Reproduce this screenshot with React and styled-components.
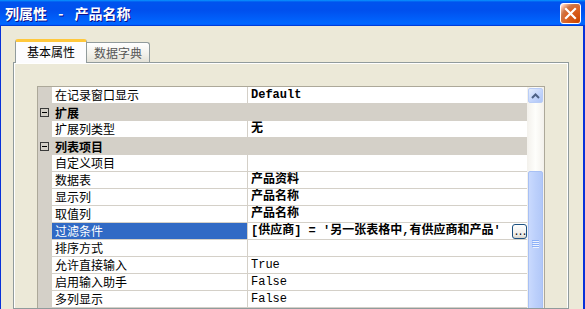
import React from "react";
import styled, { createGlobalStyle } from "styled-components";

const GlobalStyle = createGlobalStyle`
  html, body { margin: 0; padding: 0; background: #ECE9D8; overflow: hidden; }
  * { box-sizing: border-box; }
`;

const CJK = `"Noto Sans CJK SC", "Noto Sans", sans-serif`;
const MONO = `"Liberation Mono", "Noto Sans CJK SC", monospace`;

const Window = styled.div`
  width: 585px;
  height: 309px;
  display: flex;
  flex-direction: column;
  background: #ECE9D8;
  overflow: hidden;
`;

const TitleBar = styled.div`
  height: 26px;
  flex: none;
  display: flex;
  align-items: center;
  justify-content: space-between;
  padding: 0 4px 0 5px;
  background: linear-gradient(180deg, #0997ff, #0053ee 8%, #0050ee 40%, #0066ff 88%, #0066ff 93%, #005bff 95%, #003dd7 96%, #003dd7);
`;

const Title = styled.div`
  color: #fff;
  font-family: ${CJK};
  font-weight: 700;
  font-size: 14px;
  line-height: 16px;
  white-space: pre;
  word-spacing: 8px;
  text-shadow: 1px 1px #0f1089;
`;

const CloseButton = styled.div`
  width: 21px;
  height: 21px;
  border: 1px solid #fff;
  border-radius: 3px;
  background-image: radial-gradient(circle at 90% 90%, #cc4600 0, #dc6527 55%, #cd7546 70%, #ffccb2 90%, #fff 100%);
  display: flex;
  align-items: center;
  justify-content: center;
`;

const Body = styled.div`
  flex: 1;
  min-height: 0;
  display: flex;
  flex-direction: column;
  border-left: 1px solid #0831d9;
  border-right: 2px solid #0831d9;
  padding: 13px 14px 0 12px;
`;

const TabStrip = styled.div`
  height: 23px;
  flex: none;
  display: flex;
  align-items: flex-end;
  padding-left: 2px;
`;

const Tab = styled.div`
  font-family: ${CJK};
  font-size: 12px;
  display: flex;
  align-items: center;
  justify-content: center;
  border: 1px solid #919b9c;
  border-bottom: none;
  border-radius: 3px 3px 0 0;
  ${(p) =>
    p.$active
      ? `
    width: 72px;
    height: 24px;
    margin-bottom: -1px;
    position: relative;
    z-index: 1;
    border-top: 3px solid #ffc83c;
    box-shadow: inset 0 -1px 0 #fcfcfe;
    background: #fcfcfe;
    color: #000;
    padding-bottom: 2px;
  `
      : `
    width: 63px;
    height: 20px;
    border-left: none;
    border-radius: 0 3px 0 0;
    background: linear-gradient(180deg, #ffffff, #f1f0ea 60%, #e3e1d7);
    color: #555;
  `}
`;

const Panel = styled.div`
  flex: 1;
  min-height: 0;
  border: 1px solid #919b9c;
  box-shadow: inset 1px 1px 0 #fff, inset -1px 0 0 #fff;
  padding: 23px 23px 0 23px;
  overflow: hidden;
`;

const Grid = styled.div`
  width: 508px;
  height: 260px;
  border: 1px solid #aca899;
  display: flex;
  background: #fff;
`;

const Rows = styled.div`
  width: 489px;
  display: flex;
  flex-direction: column;
`;

const Row = styled.div`
  display: grid;
  grid-template-columns: 14px 196px 279px;
  height: 17px;
  flex: none;
  background: ${(p) => (p.$group ? "#D4D0C8" : "#fff")};
`;

const Gutter = styled.div`
  background: #d4d0c8;
  display: flex;
  align-items: center;
  padding-left: 2px;
`;

const NameCell = styled.div`
  border-right: 1px solid #d4d0c8;
  border-bottom: 1px solid #d4d0c8;
  padding-left: 3px;
  font-family: ${CJK};
  font-size: 12px;
  line-height: 16px;
  white-space: nowrap;
  overflow: hidden;
  background: ${(p) => (p.$selected ? "#316AC5" : "#fff")};
  color: ${(p) => (p.$selected ? "#fff" : "#000")};
`;

const ValueCell = styled.div`
  border-bottom: 1px solid #d4d0c8;
  padding-left: 3px;
  display: flex;
  align-items: center;
  min-width: 0;
`;

const ValueText = styled.span`
  flex: 1;
  min-width: 0;
  font-family: ${MONO};
  font-size: 12px;
  line-height: 16px;
  font-weight: ${(p) => (p.$bold ? 700 : 400)};
  color: #000;
  white-space: pre;
  overflow: hidden;
`;

const GroupLabel = styled.div`
  grid-column: 2 / 4;
  padding-left: 3px;
  font-family: ${CJK};
  font-size: 12px;
  font-weight: 700;
  line-height: 17px;
  color: #000;
`;

const EllipsisButton = styled.div`
  width: 15px;
  height: 15px;
  flex: none;
  border: 1px solid #1c5180;
  border-radius: 3px;
  background: linear-gradient(180deg, #ffffff, #ecebe6 80%, #d6d0c5);
  font-family: ${MONO};
  font-size: 10px;
  line-height: 15px;
  text-align: center;
  color: #000;
  letter-spacing: -2px;
  overflow: hidden;
`;

const Scrollbar = styled.div`
  width: 17px;
  display: flex;
  flex-direction: column;
  padding: 1px 1px 0 1px;
  background: linear-gradient(90deg, #f3f1ec, #fefefb 50%, #f3f1ec);
`;

const ScrollButton = styled.div`
  height: 15px;
  flex: none;
  border: 1px solid #b9cdf7;
  border-radius: 2px;
  background: linear-gradient(135deg, #e6eefc, #c1d3fb 60%, #b0c7f7);
  display: flex;
  align-items: center;
  justify-content: center;
`;

const Thumb = styled.div`
  flex: 1;
  margin-top: 68px;
  border: 1px solid #a8c0f4;
  border-radius: 2px;
  background: linear-gradient(90deg, #c9d9fd, #bcd0fb 50%, #b2c8f8);
  display: flex;
  justify-content: center;
  padding-top: 68px;
`;

const MinusIcon = () => (
  <svg width="9" height="9" viewBox="0 0 9 9">
    <rect x="0.5" y="0.5" width="8" height="8" fill="none" stroke="#3a3a3a" />
    <line x1="2" y1="4.5" x2="7" y2="4.5" stroke="#000" />
  </svg>
);

const rows = [
  { name: "在记录窗口显示", value: "Default", bold: true },
  { group: "扩展" },
  { name: "扩展列类型", value: "无", bold: true },
  { group: "列表项目" },
  { name: "自定义项目", value: "" },
  { name: "数据表", value: "产品资料", bold: true },
  { name: "显示列", value: "产品名称", bold: true },
  { name: "取值列", value: "产品名称", bold: true },
  {
    name: "过滤条件",
    value: "[供应商] = '另一张表格中,有供应商和产品'",
    bold: true,
    selected: true,
    button: true,
  },
  { name: "排序方式", value: "" },
  { name: "允许直接输入", value: "True" },
  { name: "启用输入助手", value: "False" },
  { name: "多列显示", value: "False" },
  { name: "", value: "" },
];

export default function App() {
  return (
    <>
      <GlobalStyle />
      <Window>
        <TitleBar>
          <Title>列属性 - 产品名称</Title>
          <CloseButton>
            <svg width="13" height="13" viewBox="0 0 13 13">
              <path d="M2 2 L11 11 M11 2 L2 11" stroke="#fff" strokeWidth="2.2" strokeLinecap="square" />
            </svg>
          </CloseButton>
        </TitleBar>
        <Body>
          <TabStrip>
            <Tab $active>基本属性</Tab>
            <Tab>数据字典</Tab>
          </TabStrip>
          <Panel>
            <Grid>
              <Rows>
                {rows.map((r, i) =>
                  r.group ? (
                    <Row key={i} $group>
                      <Gutter>
                        <MinusIcon />
                      </Gutter>
                      <GroupLabel>{r.group}</GroupLabel>
                    </Row>
                  ) : (
                    <Row key={i}>
                      <Gutter />
                      <NameCell $selected={r.selected}>{r.name}</NameCell>
                      <ValueCell>
                        <ValueText $bold={r.bold}>{r.value}</ValueText>
                        {r.button && <EllipsisButton>...</EllipsisButton>}
                      </ValueCell>
                    </Row>
                  )
                )}
              </Rows>
              <Scrollbar>
                <ScrollButton>
                  <svg width="9" height="6" viewBox="0 0 9 6">
                    <path d="M1 5 L4.5 1.5 L8 5" fill="none" stroke="#4d6185" strokeWidth="2" />
                  </svg>
                </ScrollButton>
                <Thumb>
                  <svg width="7" height="8" viewBox="0 0 7 8">
                    <g stroke="#8cb0f8">
                      <line x1="0" y1="0.5" x2="7" y2="0.5" />
                      <line x1="0" y1="2.5" x2="7" y2="2.5" />
                      <line x1="0" y1="4.5" x2="7" y2="4.5" />
                      <line x1="0" y1="6.5" x2="7" y2="6.5" />
                    </g>
                    <g stroke="#eef4fe">
                      <line x1="1" y1="1.5" x2="7" y2="1.5" />
                      <line x1="1" y1="3.5" x2="7" y2="3.5" />
                      <line x1="1" y1="5.5" x2="7" y2="5.5" />
                      <line x1="1" y1="7.5" x2="7" y2="7.5" />
                    </g>
                  </svg>
                </Thumb>
              </Scrollbar>
            </Grid>
          </Panel>
        </Body>
      </Window>
    </>
  );
}
